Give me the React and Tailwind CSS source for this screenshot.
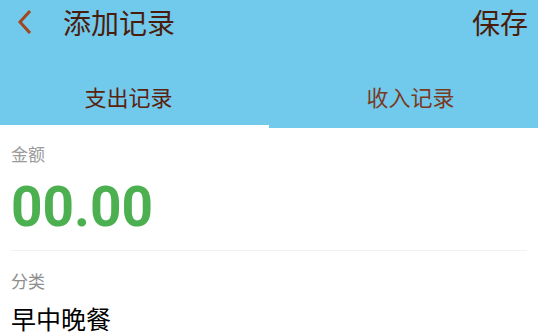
export default function App() {
  const font = { fontFamily: '"Noto Sans CJK SC", Roboto, sans-serif' }
  return (
    <div className="w-[538px] h-[333px] overflow-hidden bg-white" style={font}>
      {/* Header */}
      <div className="bg-[#71c9eb]">
        <div className="flex items-center h-[44px]">
          <button className="w-[48px] h-[44px] flex items-center justify-center pl-[2px]">
            <svg width="16" height="26" viewBox="0 0 16 26">
              <path d="M13 2 L3 13 L13 24" fill="none" stroke="#a2461f" strokeWidth="3" />
            </svg>
          </button>
          <h1 className="ml-[15px] text-[28px] leading-none text-[#4a1c0c]">添加记录</h1>
          <div className="flex-1" />
          <button className="mr-[10px] text-[28px] leading-none text-[#4a1c0c]">保存</button>
        </div>
        <div className="flex h-[84px]">
          <div className="relative w-[269px] flex items-end justify-center pr-[12px] pb-[21px]">
            <span className="text-[22px] leading-none text-[#5a220d]">支出记录</span>
            <div className="absolute left-0 right-0 bottom-0 h-[3px] bg-white" />
          </div>
          <div className="w-[269px] flex items-end justify-center pl-[14px] pb-[21px]">
            <span className="text-[22px] leading-none text-[#7a3a22]">收入记录</span>
          </div>
        </div>
      </div>

      {/* Form */}
      <div className="px-[11px]">
        <p className="mt-[16px] text-[17px] leading-[20px] text-[#9b9b9b]">金额</p>
        <p
          className="mt-[13px] text-[55px] leading-[60px] font-bold text-[#4caf50]"
          style={{ fontFamily: 'Roboto, sans-serif' }}
        >
          00.00
        </p>
        <div className="mt-[13px] h-px bg-[#f2f2f2]" />
        <p className="mt-[20px] text-[17px] leading-[20px] text-[#8e8e8e]">分类</p>
        <p className="mt-[13px] text-[25px] leading-[28px] text-black">早中晚餐</p>
      </div>
    </div>
  )
}
